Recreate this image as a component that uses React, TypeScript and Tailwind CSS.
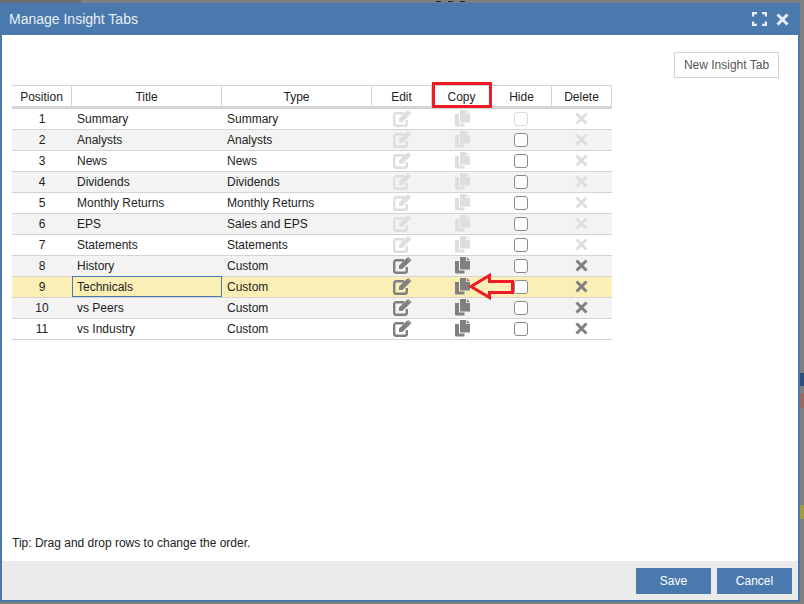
type Tab = {
  title: string;
  type: string;
  locked?: boolean;
};

const tabs: Tab[] = [
  { title: 'Summary', type: 'Summary', locked: true },
  { title: 'Analysts', type: 'Analysts', locked: true },
  { title: 'News', type: 'News', locked: true },
  { title: 'Dividends', type: 'Dividends', locked: true },
  { title: 'Monthly Returns', type: 'Monthly Returns', locked: true },
  { title: 'EPS', type: 'Sales and EPS', locked: true },
  { title: 'Statements', type: 'Statements', locked: true },
  { title: 'History', type: 'Custom' },
  { title: 'Technicals', type: 'Custom' },
  { title: 'vs Peers', type: 'Custom' },
  { title: 'vs Industry', type: 'Custom' },
];

const columns = 'grid grid-cols-[60px_150px_150px_60px_60px_60px_60px]';

function EditIcon() {
  return (
    <svg width="19" height="17" viewBox="0 0 19 17" fill="none" className="-mt-[1px]">
      <path d="M11 3.2H3.2A2 2 0 0 0 1.2 5.2V13.8A2 2 0 0 0 3.2 15.8H11.8A2 2 0 0 0 13.8 13.8V10" stroke="currentColor" strokeWidth="2.4" />
      <path d="M6 8.6L14.2 0.6L17.6 4L9.4 12H6Z" fill="currentColor" />
      <path d="M15.4 0L18.6 3.2L17.9 3.9L14.7 0.7Z" fill="currentColor" />
    </svg>
  );
}

function CopyIcon() {
  return (
    <svg width="15" height="17" viewBox="0 0 15 17" fill="currentColor" className="-mt-[1px]">
      <path d="M5 0H11V4H15V12.5H5Z" />
      <path d="M11.8 0L15 3.2H11.8Z" />
      <path d="M0 4H4V13.5H9.5V16.5H1A1 1 0 0 1 0 15.5Z" />
    </svg>
  );
}

function CrossIcon() {
  return (
    <svg width="13" height="13" viewBox="0 0 13 13" fill="none" stroke="currentColor" strokeWidth="3">
      <path d="M1.5 1.5L11.5 11.5M11.5 1.5L1.5 11.5" />
    </svg>
  );
}

function ExpandIcon() {
  return (
    <svg width="15" height="14" viewBox="0 0 15 14" fill="none" stroke="currentColor" strokeWidth="2.2">
      <path d="M5 1.1H1.1V4.5M10 1.1H13.9V4.5M5 12.9H1.1V9.5M10 12.9H13.9V9.5" />
    </svg>
  );
}

function Header() {
  const cells = ['Position', 'Title', 'Type', 'Edit', 'Copy', 'Hide', 'Delete'];
  return (
    <div className={`${columns} h-[24px] border-t border-[#d4d4d4] border-b-[3px] border-b-[#d4d4d4]`}>
      {cells.map((c) => (
        <div key={c} className="flex items-center justify-center border-r border-[#d4d4d4] pt-[1px] text-[#222]">
          {c}
        </div>
      ))}
    </div>
  );
}

function Row({ tab, index }: { tab: Tab; index: number }) {
  const selected = tab.title === 'Technicals';
  const bg = selected ? 'bg-[#fcefb6]' : index % 2 === 1 ? 'bg-[#f3f3f3]' : 'bg-white';
  const icon = tab.locked ? 'text-[#dedede]' : 'text-[#808080]';
  return (
    <div className={`${columns} ${bg} h-[21px] border-b border-[#d4d4d4] text-[#222]`}>
      <div className="flex items-center justify-center">{index + 1}</div>
      {selected ? (
        <div className="-mt-[1px] flex h-[21px] items-center border border-[#4a7aad] pl-[4px]">{tab.title}</div>
      ) : (
        <div className="flex items-center pl-[5px]">{tab.title}</div>
      )}
      <div className="flex items-center pl-[5px]">{tab.type}</div>
      <div className={`flex items-center justify-center ${icon}`}>
        <EditIcon />
      </div>
      <div className={`flex items-center justify-center ${icon}`}>
        <CopyIcon />
      </div>
      <div className="flex items-center justify-center pr-[2px]">
        <span
          className={`h-[14px] w-[14px] rounded-[3px] border bg-white ${
            tab.title === 'Summary' ? 'border-[#dcdcdc]' : 'border-[#8a8a8a]'
          }`}
        />
      </div>
      <div className={`flex items-center justify-center pb-[2px] pr-[1px] ${icon}`}>
        <CrossIcon />
      </div>
    </div>
  );
}

export default function App() {
  return (
    <div className="relative h-[604px] w-[804px] overflow-hidden bg-[#7f7f7f] pt-[3px] font-['Liberation_Sans',Arial,sans-serif] text-[12px]">
      <div className="flex h-[599px] w-[800px] flex-col border-x-2 border-b-2 border-[#4a7aad] bg-white">
        <div className="-mx-[2px] flex h-[32px] shrink-0 items-center justify-between bg-[#4a7aad] pl-[9px] pr-[11px] text-[#e8eff6]">
          <span className="text-[14px]">Manage Insight Tabs</span>
          <div className="flex items-center gap-[9px]">
            <ExpandIcon />
            <CrossIcon />
          </div>
        </div>

        <div className="flex min-h-0 flex-1 flex-col px-[10px]">
          <div className="flex h-[50px] shrink-0 items-start justify-end pr-[9px] pt-[17px]">
            <button className="h-[26px] w-[105px] border border-[#d4d4d4] bg-white text-[#555]">
              New Insight Tab
            </button>
          </div>
          <div className="w-[600px]">
            <Header />
            {tabs.map((tab, i) => (
              <Row key={tab.title} tab={tab} index={i} />
            ))}
          </div>
          <div className="mt-auto pb-[9px] text-[#222]">Tip: Drag and drop rows to change the order.</div>
        </div>

        <div className="flex h-[39px] shrink-0 items-center justify-end gap-[6px] bg-[#ebebeb] pr-[6px]">
          <button className="h-[26px] w-[75px] bg-[#4a7aad] text-white">Save</button>
          <button className="h-[26px] w-[75px] bg-[#4a7aad] text-white">Cancel</button>
        </div>
      </div>

      {/* red annotations sit on top of the dialog */}
      <div className="absolute left-[432px] top-[82px] h-[26px] w-[60px] border-[3px] border-[#ed1c24]" />
      <svg className="absolute left-[466px] top-[272px]" width="50" height="30" viewBox="0 0 50 30" fill="none">
        <path d="M5 14.5L23.5 3.5V9.5H46.5V20.5H23.5V25.5Z" stroke="#ed1c24" strokeWidth="3" />
      </svg>

      {/* bits of the page behind the dialog */}
      <div className="absolute left-0 top-0 h-[3px] w-[81px] bg-[#6e6e6e]" />
      <div className="absolute left-[436px] top-[1px] h-[1px] w-[5px] bg-[#222]" />
      <div className="absolute left-[448px] top-[1px] h-[1px] w-[5px] bg-[#222]" />
      <div className="absolute left-[460px] top-[1px] h-[1px] w-[5px] bg-[#222]" />
      <div className="absolute left-[800px] top-[373px] h-[13px] w-[4px] bg-[#2f4f7a]" />
      <div className="absolute left-[800px] top-[393px] h-[15px] w-[4px] bg-[#9a6a5c]" />
      <div className="absolute left-[800px] top-[505px] h-[14px] w-[4px] bg-[#a39a3c]" />
    </div>
  );
}
